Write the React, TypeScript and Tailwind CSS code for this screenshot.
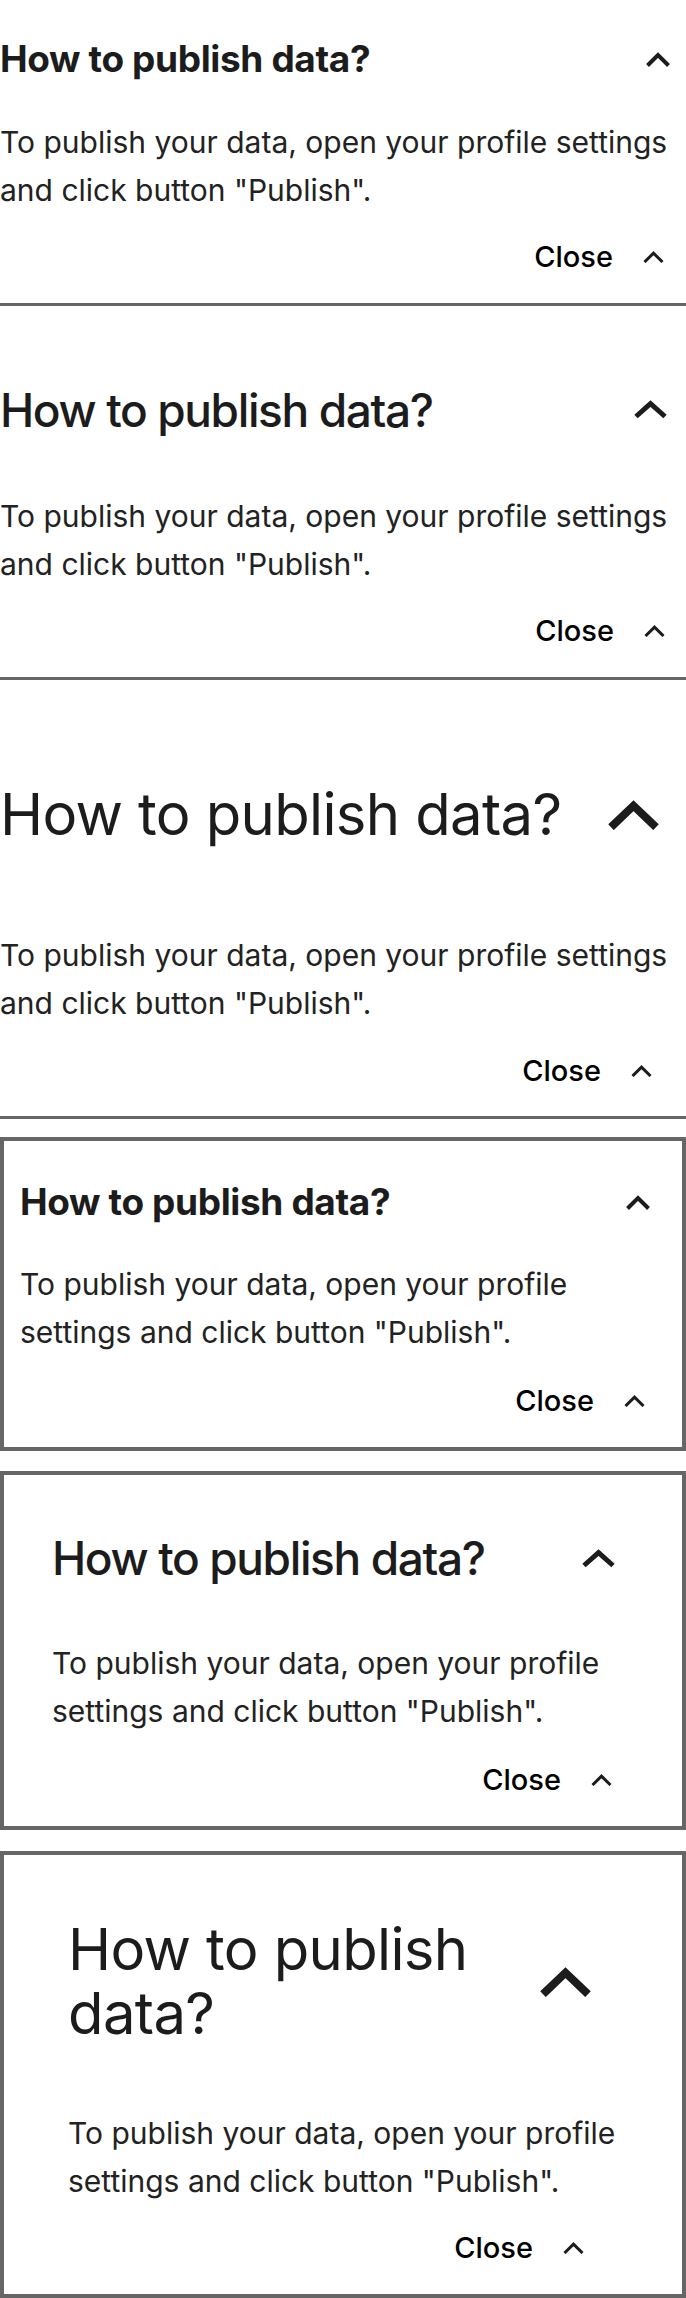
import React from 'react'

const bodyText = 'To publish your data, open your profile settings and click button "Publish".'

type Size = 'sm' | 'md' | 'lg' | 'close'

const chevrons: Record<Size, { w: number; h: number; stroke: number; points: string }> = {
  sm: { w: 24, h: 15, stroke: 4, points: '1.5,13.5 12,3 22.5,13.5' },
  md: { w: 33, h: 19, stroke: 5, points: '2,16.5 16.5,3.6 31,16.5' },
  lg: { w: 51, h: 30, stroke: 8, points: '3,27.2 25.5,5.7 48,27.2' },
  close: { w: 21, h: 12, stroke: 3, points: '1.5,11 10.5,2.2 19.5,11' },
}

function Chevron({ size, className = '' }: { size: Size; className?: string }) {
  const c = chevrons[size]
  return (
    <svg
      width={c.w}
      height={c.h}
      viewBox={`0 0 ${c.w} ${c.h}`}
      fill="none"
      className={`shrink-0 text-[#1c1c1c] ${className}`}
    >
      <polyline points={c.points} stroke="currentColor" strokeWidth={c.stroke} strokeLinejoin="miter" strokeLinecap="butt" />
    </svg>
  )
}

type FaqProps = {
  wrap: string
  header: string
  title: string
  icon: Size
  iconMargin: string
  body: string
  close: string
}

function Faq({ wrap, header, title, icon, iconMargin, body, close }: FaqProps) {
  return (
    <section className={wrap}>
      <div className={`flex items-center justify-between gap-6 ${header}`}>
        <h2 className={`min-w-0 text-[#1c1c1c] ${title}`}>How to publish data?</h2>
        <Chevron size={icon} className={iconMargin} />
      </div>
      <p className={`text-[30px] leading-[48px] text-[#222] ${body}`}>{bodyText}</p>
      <div className={`flex items-center justify-end gap-[30px] ${close}`}>
        <span className="text-[29px] leading-[36px] font-medium text-black">Close</span>
        <Chevron size="close" />
      </div>
    </section>
  )
}

export default function App() {
  return (
    <div className="min-h-screen bg-white font-['Inter',sans-serif]">
      {/* flat variants */}
      <Faq
        wrap="border-b-[3px] border-[#666]"
        header="pt-[39px]"
        title="text-[37px] leading-[1.1] font-bold tracking-[-0.01em]"
        icon="sm"
        iconMargin="mr-[16px]"
        body="mt-[38px]"
        close="mt-[25px] pb-[28px] pr-[22px]"
      />
      <Faq
        wrap="border-b-[3px] border-[#666]"
        header="pt-[79px]"
        title="text-[46px] leading-[1.1] font-medium tracking-[-0.03em]"
        icon="md"
        iconMargin="mr-[19px]"
        body="mt-[57px]"
        close="mt-[25px] pb-[28px] pr-[21px]"
      />
      <Faq
        wrap="border-b-[3px] border-[#666]"
        header="pt-[103px]"
        title="text-[58px] leading-[1.1] font-normal tracking-[-0.011em]"
        icon="lg"
        iconMargin="mr-[27px]"
        body="mt-[84px]"
        close="mt-[26px] pb-[27px] pr-[34px]"
      />

      {/* boxed variants */}
      <Faq
        wrap="mt-[18px] border-4 border-[#666] px-4"
        header="pt-[41px]"
        title="text-[37px] leading-[1.1] font-bold tracking-[-0.01em]"
        icon="sm"
        iconMargin="mr-[16px]"
        body="mt-[37px]"
        close="mt-[27px] pb-[28px] pr-[21px]"
      />
      <Faq
        wrap="mt-[20px] border-4 border-[#666] px-12"
        header="pt-[58px]"
        title="text-[46px] leading-[1.1] font-medium tracking-[-0.03em]"
        icon="md"
        iconMargin="mr-[19px]"
        body="mt-[56px]"
        close="mt-[27px] pb-[28px] pr-[22px]"
      />
      <Faq
        wrap="mt-[21px] border-4 border-[#666] px-16"
        header="pt-[63px]"
        title="text-[58px] leading-[1.1] font-normal tracking-[-0.011em]"
        icon="lg"
        iconMargin="mr-[27px]"
        body="mt-[63px]"
        close="mt-[25px] pb-[28px] pr-[34px]"
      />
    </div>
  )
}
